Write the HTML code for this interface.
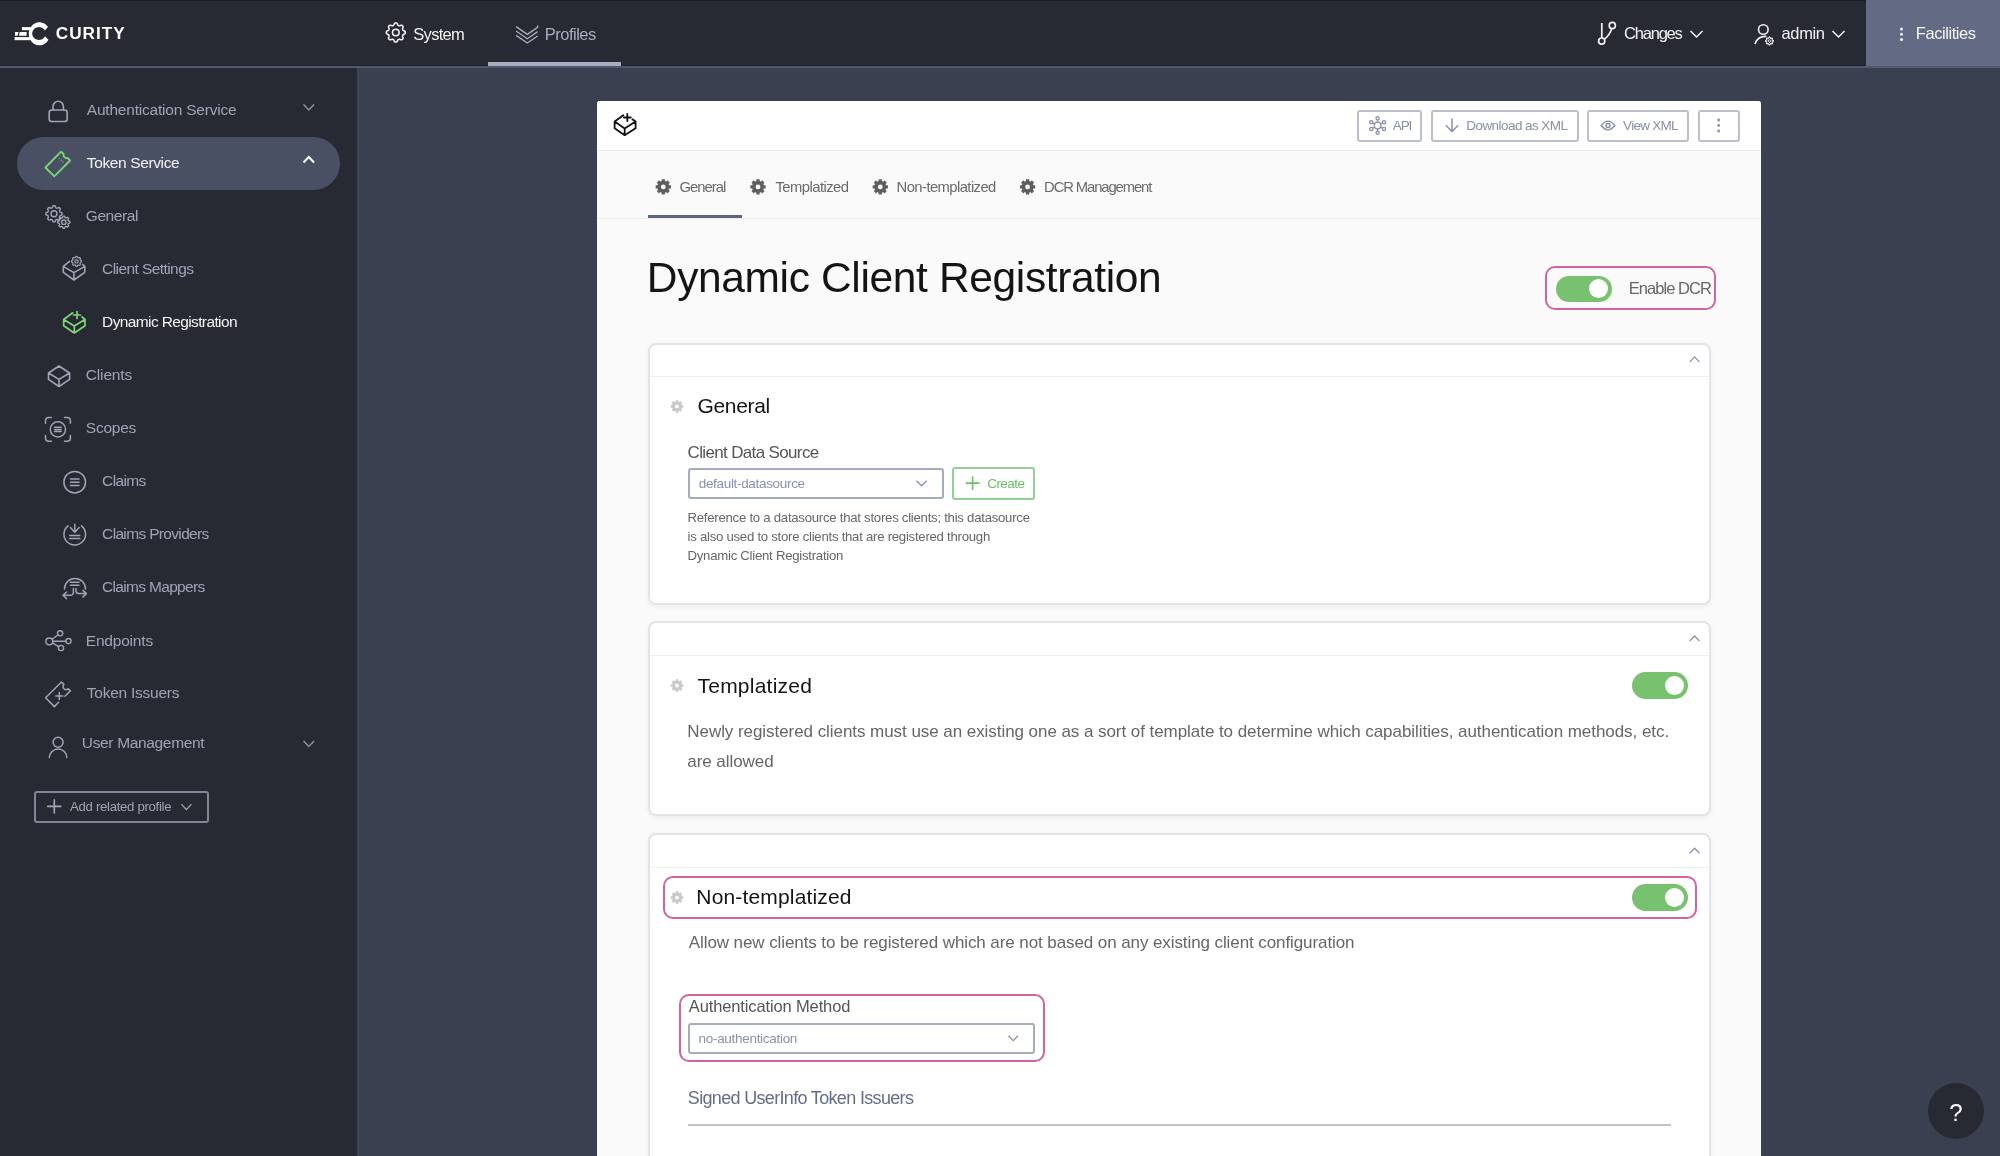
<!DOCTYPE html>
<html><head><meta charset="utf-8">
<style>
*{box-sizing:border-box;margin:0;padding:0}
html,body{width:2000px;height:1156px;overflow:hidden;font-family:"Liberation Sans",sans-serif;background:#3b4050;position:relative}
.abs{position:absolute}
.t{position:absolute;white-space:nowrap;line-height:1}
.bl{display:inline-block;width:0;height:0;vertical-align:baseline}
#tx{position:absolute;left:0;top:0;width:2000px;height:1156px;will-change:transform}
#ov{position:absolute;left:0;top:0;width:2000px;height:1156px;overflow:visible}
.btn{border:2px solid #bcc0cd;border-radius:3px;background:#fff}
.pink{border:2px solid #d4629f;border-radius:10px}
.tog{border-radius:14px;background:#78c26f}
.knob{position:absolute;width:19px;height:19px;border-radius:50%;background:#fff}
.card{background:#fff;border:2px solid #e1e5e9;border-radius:8px;box-shadow:0 2px 5px rgba(0,0,0,0.06)}
.ch{position:absolute;left:0;top:31.5px;width:100%;height:1px;background:#efefef}
.sel{border:2px solid #a6abbd;border-radius:3px;background:#fff}
</style></head><body>

<div class="abs" style="left:0;top:0;width:2000px;height:66px;background:#272a33;border-top:1px solid #1b1d23"></div>
<div class="abs" style="left:0;top:65px;width:2000px;height:1px;background:#20222a"></div>
<div class="abs" style="left:1866px;top:0;width:134px;height:66px;background:#636a83"></div>
<div class="abs" style="left:0;top:66px;width:2000px;height:2px;background:#51586f"></div>
<div class="abs" style="left:488px;top:62px;width:133px;height:4px;background:#a9adbf"></div>
<div class="abs" style="left:0;top:68px;width:357px;height:1088px;background:#272a33"></div>
<div class="abs" style="left:357px;top:68px;width:2px;height:1088px;background:#3f4352"></div>
<div class="abs" style="left:17px;top:137px;width:323px;height:53px;border-radius:27px;background:#4a5064"></div>
<div class="abs" style="left:33.5px;top:790.5px;width:175px;height:32px;border:2px solid #80859a;border-radius:3px"></div>
<!-- main card -->
<div class="abs" style="left:597px;top:101px;width:1164px;height:1100px;background:#fafafa;border-radius:3px 3px 0 0"></div>
<div class="abs" style="left:597px;top:101px;width:1164px;height:50px;background:#ffffff;border-radius:3px 3px 0 0;border-bottom:1px solid #ebebeb"></div>
<div class="abs" style="left:597px;top:218px;width:1164px;height:1px;background:#ececec"></div>
<div class="abs" style="left:647.5px;top:214.5px;width:94px;height:3px;background:#5c6585"></div>
<!-- header buttons -->
<div class="abs btn" style="left:1356.5px;top:109.5px;width:65.5px;height:32px"></div>
<div class="abs btn" style="left:1431px;top:109.5px;width:147.5px;height:32px"></div>
<div class="abs btn" style="left:1587px;top:109.5px;width:102px;height:32px"></div>
<div class="abs btn" style="left:1697.5px;top:109.5px;width:42.5px;height:32px"></div>
<!-- enable dcr -->
<div class="abs pink" style="left:1544.5px;top:265.5px;width:171.5px;height:44px"></div>
<div class="abs tog" style="left:1556px;top:275.5px;width:56px;height:26.5px"><div class="knob" style="left:33px;top:3.5px"></div></div>
<!-- section cards -->
<div class="abs card" style="left:647.5px;top:342.5px;width:1063.5px;height:262px"><div class="ch"></div></div>
<div class="abs card" style="left:647.5px;top:621px;width:1063.5px;height:194.5px"><div class="ch"></div></div>
<div class="abs card" style="left:647.5px;top:833px;width:1063.5px;height:400px"><div class="ch"></div></div>
<!-- card1 controls -->
<div class="abs sel" style="left:687.5px;top:468px;width:256px;height:31px"></div>
<div class="abs" style="left:952px;top:467px;width:83px;height:33px;border:2px solid #93d091;border-radius:3px"></div>
<!-- card2 toggle -->
<div class="abs tog" style="left:1631.5px;top:672px;width:56px;height:27px"><div class="knob" style="left:33px;top:4px"></div></div>
<!-- card3 -->
<div class="abs pink" style="left:662.5px;top:876px;width:1034px;height:43px"></div>
<div class="abs tog" style="left:1631.5px;top:884px;width:56px;height:27px"><div class="knob" style="left:33px;top:4px"></div></div>
<div class="abs pink" style="left:679px;top:994px;width:366px;height:67.5px"></div>
<div class="abs sel" style="left:688px;top:1023px;width:347px;height:30.5px"></div>
<div class="abs" style="left:688px;top:1124px;width:983px;height:2px;background:#c0c3d1"></div>
<!-- help -->
<div class="abs" style="left:1928px;top:1083px;width:56px;height:56px;border-radius:50%;background:#272a33"></div>
<svg id="ov" width="2000" height="1156" viewBox="0 0 2000 1156"><g fill="#ffffff"><path d="M47.98,27.01 L47.41,26.24 L46.79,25.52 L46.12,24.87 L45.40,24.28 L44.63,23.76 L43.83,23.31 L42.99,22.93 L42.13,22.64 L41.25,22.43 L40.35,22.30 L39.45,22.25 L38.55,22.29 L37.65,22.41 L36.77,22.61 L35.91,22.90 L35.07,23.26 L34.26,23.70 L33.49,24.21 L32.76,24.80 L32.08,25.45 L31.45,26.15 L30.89,26.92 L30.38,27.73 L29.94,28.59 L29.57,29.49 L29.26,30.42 L29.04,31.37 L28.89,32.34 L28.81,33.32 L28.81,34.30 L28.89,35.28 L29.04,36.25 L29.27,37.21 L29.57,38.13 L29.95,39.03 L30.39,39.89 L30.90,40.70 L31.47,41.46 L32.10,42.17 L32.78,42.82 L33.51,43.40 L34.28,43.91 L35.09,44.35 L35.93,44.71 L36.79,44.99 L37.67,45.20 L38.57,45.31 L39.47,45.35 L40.38,45.30 L41.27,45.17 L42.15,44.95 L43.01,44.66 L43.85,44.28 L44.65,43.83 L45.42,43.31 L46.14,42.72 L46.81,42.06 L47.43,41.34 L47.99,40.57 L48.49,39.75 L45.02,36.31 L44.73,36.80 L44.40,37.28 L44.02,37.72 L43.61,38.13 L43.16,38.50 L42.68,38.84 L42.16,39.13 L41.62,39.38 L41.06,39.58 L40.49,39.73 L39.90,39.84 L39.30,39.89 L38.70,39.90 L38.11,39.85 L37.52,39.75 L36.94,39.61 L36.38,39.42 L35.83,39.18 L35.31,38.89 L34.83,38.57 L34.37,38.20 L33.95,37.80 L33.57,37.36 L33.23,36.89 L32.93,36.40 L32.68,35.88 L32.49,35.34 L32.34,34.79 L32.24,34.23 L32.20,33.67 L32.21,33.10 L32.28,32.54 L32.39,31.98 L32.56,31.43 L32.78,30.91 L33.05,30.40 L33.36,29.91 L33.72,29.46 L34.11,29.03 L34.55,28.65 L35.02,28.30 L35.52,27.99 L36.05,27.72 L36.60,27.50 L37.17,27.33 L37.76,27.20 L38.35,27.13 L38.95,27.10 L39.55,27.13 L40.14,27.20 L40.73,27.33 L41.30,27.50 L41.85,27.72 L42.38,27.99 L42.88,28.30 L43.35,28.65 L43.79,29.03 L44.18,29.46 L44.54,29.91 L44.85,30.40Z"/><rect x="21.9" y="27.1" width="9" height="3.1"/><path d="M15,32 H18.6 L17.6,35.7 H15 Z M19.8,32 H26.6 V35.7 H18.9 Z"/><rect x="14.6" y="37.1" width="15.5" height="3.1"/></g>
<path d="M405.30,32.50 L405.28,32.81 L405.22,33.12 L405.10,33.42 L404.89,33.70 L404.56,33.95 L404.14,34.16 L403.71,34.34 L403.37,34.53 L403.13,34.72 L402.96,34.93 L402.83,35.15 L402.73,35.37 L402.64,35.60 L402.58,35.84 L402.55,36.11 L402.59,36.42 L402.70,36.79 L402.87,37.22 L403.02,37.67 L403.07,38.08 L403.02,38.43 L402.90,38.72 L402.72,38.98 L402.52,39.22 L402.28,39.42 L402.02,39.60 L401.73,39.72 L401.38,39.77 L400.97,39.72 L400.52,39.57 L400.09,39.40 L399.72,39.29 L399.41,39.25 L399.14,39.28 L398.90,39.34 L398.67,39.43 L398.45,39.53 L398.23,39.66 L398.02,39.83 L397.83,40.07 L397.64,40.41 L397.46,40.84 L397.25,41.26 L397.00,41.59 L396.72,41.80 L396.42,41.92 L396.11,41.98 L395.80,42.00 L395.49,41.98 L395.18,41.92 L394.88,41.80 L394.60,41.59 L394.35,41.26 L394.14,40.84 L393.96,40.41 L393.77,40.07 L393.58,39.83 L393.37,39.66 L393.15,39.53 L392.93,39.43 L392.70,39.34 L392.46,39.28 L392.19,39.25 L391.88,39.29 L391.51,39.40 L391.08,39.57 L390.63,39.72 L390.22,39.77 L389.87,39.72 L389.58,39.60 L389.32,39.42 L389.08,39.22 L388.88,38.98 L388.70,38.72 L388.58,38.43 L388.53,38.08 L388.58,37.67 L388.73,37.22 L388.90,36.79 L389.01,36.42 L389.05,36.11 L389.02,35.84 L388.96,35.60 L388.87,35.37 L388.77,35.15 L388.64,34.93 L388.47,34.72 L388.23,34.53 L387.89,34.34 L387.46,34.16 L387.04,33.95 L386.71,33.70 L386.50,33.42 L386.38,33.12 L386.32,32.81 L386.30,32.50 L386.32,32.19 L386.38,31.88 L386.50,31.58 L386.71,31.30 L387.04,31.05 L387.46,30.84 L387.89,30.66 L388.23,30.47 L388.47,30.28 L388.64,30.07 L388.77,29.85 L388.87,29.63 L388.96,29.40 L389.02,29.16 L389.05,28.89 L389.01,28.58 L388.90,28.21 L388.73,27.78 L388.58,27.33 L388.53,26.92 L388.58,26.57 L388.70,26.28 L388.88,26.02 L389.08,25.78 L389.32,25.58 L389.58,25.40 L389.87,25.28 L390.22,25.23 L390.63,25.28 L391.08,25.43 L391.51,25.60 L391.88,25.71 L392.19,25.75 L392.46,25.72 L392.70,25.66 L392.93,25.57 L393.15,25.47 L393.37,25.34 L393.58,25.17 L393.77,24.93 L393.96,24.59 L394.14,24.16 L394.35,23.74 L394.60,23.41 L394.88,23.20 L395.18,23.08 L395.49,23.02 L395.80,23.00 L396.11,23.02 L396.42,23.08 L396.72,23.20 L397.00,23.41 L397.25,23.74 L397.46,24.16 L397.64,24.59 L397.83,24.93 L398.02,25.17 L398.23,25.34 L398.45,25.47 L398.67,25.57 L398.90,25.66 L399.14,25.72 L399.41,25.75 L399.72,25.71 L400.09,25.60 L400.52,25.43 L400.97,25.28 L401.38,25.23 L401.73,25.28 L402.02,25.40 L402.28,25.58 L402.52,25.78 L402.72,26.02 L402.90,26.28 L403.02,26.57 L403.07,26.92 L403.02,27.33 L402.87,27.78 L402.70,28.21 L402.59,28.58 L402.55,28.89 L402.58,29.16 L402.64,29.40 L402.73,29.63 L402.83,29.85 L402.96,30.07 L403.13,30.28 L403.37,30.47 L403.71,30.66 L404.14,30.84 L404.56,31.05 L404.89,31.30 L405.10,31.58 L405.22,31.88 L405.28,32.19Z" fill="none" stroke="#f2f2f4" stroke-width="1.6" stroke-linejoin="round"/><circle cx="395.8" cy="32.5" r="3.3" fill="none" stroke="#f2f2f4" stroke-width="1.6"/>
<g fill="none" stroke="#a9adbf" stroke-width="1.3"><path d="M516.1,26.6 L527.3,34.4 L537.6,27.4 V25.6"/><path d="M516.1,31 L527.3,38.8 L537.6,31.6"/><path d="M516.1,35.4 L527.3,43 L537.6,36"/></g>
<g fill="none" stroke="#f2f2f4" stroke-width="1.7"><line x1="1601.8" y1="23" x2="1601.8" y2="38"/><circle cx="1601.7" cy="41.1" r="3.1"/><circle cx="1612.3" cy="25.5" r="3.1"/><path d="M1611.6,28.6 Q1610,35.2 1604,39.2"/></g>
<path d="M1690.5,31 L1696.5,37 L1702.5,31" fill="none" stroke="#f2f2f4" stroke-width="1.5"/>
<g fill="none" stroke="#f2f2f4" stroke-width="1.6"><circle cx="1763.3" cy="29.5" r="4.8"/><path d="M1755,44 A10,10 0 0,1 1766.5,36.5"/></g><path d="M1773.40,41.00 L1773.40,41.13 L1773.38,41.25 L1773.35,41.38 L1773.29,41.50 L1773.14,41.60 L1772.88,41.67 L1772.63,41.73 L1772.48,41.80 L1772.40,41.88 L1772.35,41.97 L1772.31,42.06 L1772.27,42.15 L1772.23,42.24 L1772.20,42.33 L1772.17,42.43 L1772.17,42.54 L1772.23,42.70 L1772.37,42.92 L1772.50,43.15 L1772.53,43.32 L1772.49,43.46 L1772.43,43.57 L1772.35,43.66 L1772.26,43.76 L1772.16,43.85 L1772.07,43.93 L1771.96,43.99 L1771.82,44.03 L1771.65,44.00 L1771.42,43.87 L1771.20,43.73 L1771.04,43.67 L1770.93,43.67 L1770.83,43.70 L1770.74,43.73 L1770.65,43.77 L1770.56,43.81 L1770.47,43.85 L1770.38,43.90 L1770.30,43.98 L1770.23,44.13 L1770.17,44.38 L1770.10,44.64 L1770.00,44.79 L1769.88,44.85 L1769.75,44.88 L1769.63,44.90 L1769.50,44.90 L1769.37,44.90 L1769.25,44.88 L1769.12,44.85 L1769.00,44.79 L1768.90,44.64 L1768.83,44.38 L1768.77,44.13 L1768.70,43.98 L1768.62,43.90 L1768.53,43.85 L1768.44,43.81 L1768.35,43.77 L1768.26,43.73 L1768.17,43.70 L1768.07,43.67 L1767.96,43.67 L1767.80,43.73 L1767.58,43.87 L1767.35,44.00 L1767.18,44.03 L1767.04,43.99 L1766.93,43.93 L1766.84,43.85 L1766.74,43.76 L1766.65,43.66 L1766.57,43.57 L1766.51,43.46 L1766.47,43.32 L1766.50,43.15 L1766.63,42.92 L1766.77,42.70 L1766.83,42.54 L1766.83,42.43 L1766.80,42.33 L1766.77,42.24 L1766.73,42.15 L1766.69,42.06 L1766.65,41.97 L1766.60,41.88 L1766.52,41.80 L1766.37,41.73 L1766.12,41.67 L1765.86,41.60 L1765.71,41.50 L1765.65,41.38 L1765.62,41.25 L1765.60,41.13 L1765.60,41.00 L1765.60,40.87 L1765.62,40.75 L1765.65,40.62 L1765.71,40.50 L1765.86,40.40 L1766.12,40.33 L1766.37,40.27 L1766.52,40.20 L1766.60,40.12 L1766.65,40.03 L1766.69,39.94 L1766.73,39.85 L1766.77,39.76 L1766.80,39.67 L1766.83,39.57 L1766.83,39.46 L1766.77,39.30 L1766.63,39.08 L1766.50,38.85 L1766.47,38.68 L1766.51,38.54 L1766.57,38.43 L1766.65,38.34 L1766.74,38.24 L1766.84,38.15 L1766.93,38.07 L1767.04,38.01 L1767.18,37.97 L1767.35,38.00 L1767.58,38.13 L1767.80,38.27 L1767.96,38.33 L1768.07,38.33 L1768.17,38.30 L1768.26,38.27 L1768.35,38.23 L1768.44,38.19 L1768.53,38.15 L1768.62,38.10 L1768.70,38.02 L1768.77,37.87 L1768.83,37.62 L1768.90,37.36 L1769.00,37.21 L1769.12,37.15 L1769.25,37.12 L1769.37,37.10 L1769.50,37.10 L1769.63,37.10 L1769.75,37.12 L1769.88,37.15 L1770.00,37.21 L1770.10,37.36 L1770.17,37.62 L1770.23,37.87 L1770.30,38.02 L1770.38,38.10 L1770.47,38.15 L1770.56,38.19 L1770.65,38.23 L1770.74,38.27 L1770.83,38.30 L1770.93,38.33 L1771.04,38.33 L1771.20,38.27 L1771.42,38.13 L1771.65,38.00 L1771.82,37.97 L1771.96,38.01 L1772.07,38.07 L1772.16,38.15 L1772.26,38.24 L1772.35,38.34 L1772.43,38.43 L1772.49,38.54 L1772.53,38.68 L1772.50,38.85 L1772.37,39.08 L1772.23,39.30 L1772.17,39.46 L1772.17,39.57 L1772.20,39.67 L1772.23,39.76 L1772.27,39.85 L1772.31,39.94 L1772.35,40.03 L1772.40,40.12 L1772.48,40.20 L1772.63,40.27 L1772.88,40.33 L1773.14,40.40 L1773.29,40.50 L1773.35,40.62 L1773.38,40.75 L1773.40,40.87Z" fill="#272a33" stroke="#f2f2f4" stroke-width="1.1"/><circle cx="1769.5" cy="41" r="1.3" fill="none" stroke="#f2f2f4" stroke-width="0.9"/>
<path d="M1832.5,31 L1838.5,37 L1844.5,31" fill="none" stroke="#f2f2f4" stroke-width="1.5"/>
<g fill="#f6f6f8"><circle cx="1901.5" cy="29" r="1.5"/><circle cx="1901.5" cy="34.2" r="1.5"/><circle cx="1901.5" cy="39.4" r="1.5"/></g>
<g fill="none" stroke="#9fa4b6" stroke-width="1.6" stroke-linejoin="round" stroke-linecap="round"><rect x="49.2" y="110" width="18" height="11.5" rx="2.6"/><path d="M53,110 V106.5 A5.2,5.2 0 0,1 63.4,106.5 V110"/></g>
<path d="M303.5,104.5 L308.8,110 L314,104.5" fill="none" stroke="#8b90a4" stroke-width="1.5"/>
<g fill="none" stroke="#7bd677" stroke-width="1.8" stroke-linejoin="round" stroke-linecap="round"><path d="M61.1,151.6 L45.4,167.5 L54.3,176.3 L70.1,160.5 L67.6,158 A3.2,3.2 0 0,1 63.6,154 Z"/></g>
<g fill="#7bd677"><circle cx="59.5" cy="158.5" r="0.6"/><circle cx="61.2" cy="160.2" r="0.6"/><circle cx="62.9" cy="161.9" r="0.6"/></g>
<path d="M303.5,162.5 L308.8,157 L314,162.5" fill="none" stroke="#ffffff" stroke-width="2"/>
<g fill="none" stroke="#9fa4b6" stroke-width="1.4" stroke-linejoin="round" stroke-linecap="round"><path d="M62.10,213.80 L62.09,214.06 L62.07,214.33 L62.00,214.59 L61.87,214.84 L61.57,215.05 L61.06,215.20 L60.55,215.33 L60.24,215.47 L60.08,215.65 L59.98,215.83 L59.90,216.02 L59.82,216.21 L59.74,216.40 L59.67,216.59 L59.61,216.80 L59.60,217.03 L59.71,217.35 L59.99,217.80 L60.24,218.27 L60.30,218.63 L60.22,218.90 L60.08,219.13 L59.91,219.33 L59.73,219.53 L59.53,219.71 L59.33,219.88 L59.10,220.02 L58.83,220.10 L58.47,220.04 L58.00,219.79 L57.55,219.51 L57.23,219.40 L57.00,219.41 L56.79,219.47 L56.60,219.54 L56.41,219.62 L56.22,219.70 L56.03,219.78 L55.85,219.88 L55.67,220.04 L55.53,220.35 L55.40,220.86 L55.25,221.37 L55.04,221.67 L54.79,221.80 L54.53,221.87 L54.26,221.89 L54.00,221.90 L53.74,221.89 L53.47,221.87 L53.21,221.80 L52.96,221.67 L52.75,221.37 L52.60,220.86 L52.47,220.35 L52.33,220.04 L52.15,219.88 L51.97,219.78 L51.78,219.70 L51.59,219.62 L51.40,219.54 L51.21,219.47 L51.00,219.41 L50.77,219.40 L50.45,219.51 L50.00,219.79 L49.53,220.04 L49.17,220.10 L48.90,220.02 L48.67,219.88 L48.47,219.71 L48.27,219.53 L48.09,219.33 L47.92,219.13 L47.78,218.90 L47.70,218.63 L47.76,218.27 L48.01,217.80 L48.29,217.35 L48.40,217.03 L48.39,216.80 L48.33,216.59 L48.26,216.40 L48.18,216.21 L48.10,216.02 L48.02,215.83 L47.92,215.65 L47.76,215.47 L47.45,215.33 L46.94,215.20 L46.43,215.05 L46.13,214.84 L46.00,214.59 L45.93,214.33 L45.91,214.06 L45.90,213.80 L45.91,213.54 L45.93,213.27 L46.00,213.01 L46.13,212.76 L46.43,212.55 L46.94,212.40 L47.45,212.27 L47.76,212.13 L47.92,211.95 L48.02,211.77 L48.10,211.58 L48.18,211.39 L48.26,211.20 L48.33,211.01 L48.39,210.80 L48.40,210.57 L48.29,210.25 L48.01,209.80 L47.76,209.33 L47.70,208.97 L47.78,208.70 L47.92,208.47 L48.09,208.27 L48.27,208.07 L48.47,207.89 L48.67,207.72 L48.90,207.58 L49.17,207.50 L49.53,207.56 L50.00,207.81 L50.45,208.09 L50.77,208.20 L51.00,208.19 L51.21,208.13 L51.40,208.06 L51.59,207.98 L51.78,207.90 L51.97,207.82 L52.15,207.72 L52.33,207.56 L52.47,207.25 L52.60,206.74 L52.75,206.23 L52.96,205.93 L53.21,205.80 L53.47,205.73 L53.74,205.71 L54.00,205.70 L54.26,205.71 L54.53,205.73 L54.79,205.80 L55.04,205.93 L55.25,206.23 L55.40,206.74 L55.53,207.25 L55.67,207.56 L55.85,207.72 L56.03,207.82 L56.22,207.90 L56.41,207.98 L56.60,208.06 L56.79,208.13 L57.00,208.19 L57.23,208.20 L57.55,208.09 L58.00,207.81 L58.47,207.56 L58.83,207.50 L59.10,207.58 L59.33,207.72 L59.53,207.89 L59.73,208.07 L59.91,208.27 L60.08,208.47 L60.22,208.70 L60.30,208.97 L60.24,209.33 L59.99,209.80 L59.71,210.25 L59.60,210.57 L59.61,210.80 L59.67,211.01 L59.74,211.20 L59.82,211.39 L59.90,211.58 L59.98,211.77 L60.08,211.95 L60.24,212.13 L60.55,212.27 L61.06,212.40 L61.57,212.55 L61.87,212.76 L62.00,213.01 L62.07,213.27 L62.09,213.54Z"/><circle cx="54" cy="213.8" r="3"/></g>
<g fill="none" stroke="#9fa4b6" stroke-width="1.4" stroke-linejoin="round" stroke-linecap="round"><path d="M69.90,222.20 L69.89,222.40 L69.87,222.60 L69.83,222.79 L69.72,222.98 L69.49,223.14 L69.10,223.25 L68.70,223.34 L68.46,223.45 L68.34,223.58 L68.26,223.72 L68.20,223.86 L68.14,224.00 L68.08,224.14 L68.03,224.28 L67.98,224.44 L67.98,224.61 L68.07,224.86 L68.29,225.20 L68.49,225.56 L68.54,225.84 L68.48,226.04 L68.38,226.21 L68.25,226.37 L68.11,226.51 L67.97,226.65 L67.81,226.78 L67.64,226.88 L67.44,226.94 L67.16,226.89 L66.80,226.69 L66.46,226.47 L66.21,226.38 L66.04,226.38 L65.88,226.43 L65.74,226.48 L65.60,226.54 L65.46,226.60 L65.32,226.66 L65.18,226.74 L65.05,226.86 L64.94,227.10 L64.85,227.50 L64.74,227.89 L64.58,228.12 L64.39,228.23 L64.20,228.27 L64.00,228.29 L63.80,228.30 L63.60,228.29 L63.40,228.27 L63.21,228.23 L63.02,228.12 L62.86,227.89 L62.75,227.50 L62.66,227.10 L62.55,226.86 L62.42,226.74 L62.28,226.66 L62.14,226.60 L62.00,226.54 L61.86,226.48 L61.72,226.43 L61.56,226.38 L61.39,226.38 L61.14,226.47 L60.80,226.69 L60.44,226.89 L60.16,226.94 L59.96,226.88 L59.79,226.78 L59.63,226.65 L59.49,226.51 L59.35,226.37 L59.22,226.21 L59.12,226.04 L59.06,225.84 L59.11,225.56 L59.31,225.20 L59.53,224.86 L59.62,224.61 L59.62,224.44 L59.57,224.28 L59.52,224.14 L59.46,224.00 L59.40,223.86 L59.34,223.72 L59.26,223.58 L59.14,223.45 L58.90,223.34 L58.50,223.25 L58.11,223.14 L57.88,222.98 L57.77,222.79 L57.73,222.60 L57.71,222.40 L57.70,222.20 L57.71,222.00 L57.73,221.80 L57.77,221.61 L57.88,221.42 L58.11,221.26 L58.50,221.15 L58.90,221.06 L59.14,220.95 L59.26,220.82 L59.34,220.68 L59.40,220.54 L59.46,220.40 L59.52,220.26 L59.57,220.12 L59.62,219.96 L59.62,219.79 L59.53,219.54 L59.31,219.20 L59.11,218.84 L59.06,218.56 L59.12,218.36 L59.22,218.19 L59.35,218.03 L59.49,217.89 L59.63,217.75 L59.79,217.62 L59.96,217.52 L60.16,217.46 L60.44,217.51 L60.80,217.71 L61.14,217.93 L61.39,218.02 L61.56,218.02 L61.72,217.97 L61.86,217.92 L62.00,217.86 L62.14,217.80 L62.28,217.74 L62.42,217.66 L62.55,217.54 L62.66,217.30 L62.75,216.90 L62.86,216.51 L63.02,216.28 L63.21,216.17 L63.40,216.13 L63.60,216.11 L63.80,216.10 L64.00,216.11 L64.20,216.13 L64.39,216.17 L64.58,216.28 L64.74,216.51 L64.85,216.90 L64.94,217.30 L65.05,217.54 L65.18,217.66 L65.32,217.74 L65.46,217.80 L65.60,217.86 L65.74,217.92 L65.88,217.97 L66.04,218.02 L66.21,218.02 L66.46,217.93 L66.80,217.71 L67.16,217.51 L67.44,217.46 L67.64,217.52 L67.81,217.62 L67.97,217.75 L68.11,217.89 L68.25,218.03 L68.38,218.19 L68.48,218.36 L68.54,218.56 L68.49,218.84 L68.29,219.20 L68.07,219.54 L67.98,219.79 L67.98,219.96 L68.03,220.12 L68.08,220.26 L68.14,220.40 L68.20,220.54 L68.26,220.68 L68.34,220.82 L68.46,220.95 L68.70,221.06 L69.10,221.15 L69.49,221.26 L69.72,221.42 L69.83,221.61 L69.87,221.80 L69.89,222.00Z"/><circle cx="63.8" cy="222.2" r="2.2"/></g>
<g fill="none" stroke="#9fa4b6" stroke-width="1.6" stroke-linejoin="round" stroke-linecap="round"><path d="M63.3,272.3 L63.3,266.4 L73.9,272.6 L84.8,266.4 L84.8,272.3 L73.9,280 Z M73.9,272.6 L73.9,280 M63.3,266.4 L69.5,261.4 M82.7,264.4 L84.8,266.4"/></g>
<g fill="none" stroke="#9fa4b6" stroke-width="1.2" stroke-linejoin="round" stroke-linecap="round"><path d="M81.50,261.40 L81.50,261.56 L81.48,261.73 L81.44,261.89 L81.37,262.04 L81.20,262.18 L80.91,262.28 L80.63,262.36 L80.45,262.46 L80.36,262.57 L80.30,262.69 L80.25,262.81 L80.20,262.93 L80.15,263.05 L80.10,263.17 L80.06,263.30 L80.04,263.44 L80.10,263.64 L80.24,263.90 L80.37,264.17 L80.40,264.39 L80.34,264.55 L80.25,264.69 L80.15,264.82 L80.04,264.94 L79.92,265.05 L79.79,265.15 L79.65,265.24 L79.49,265.30 L79.27,265.27 L79.00,265.14 L78.74,265.00 L78.54,264.94 L78.40,264.96 L78.27,265.00 L78.15,265.05 L78.03,265.10 L77.91,265.15 L77.79,265.20 L77.67,265.26 L77.56,265.35 L77.46,265.53 L77.38,265.81 L77.28,266.10 L77.14,266.27 L76.99,266.34 L76.83,266.38 L76.66,266.40 L76.50,266.40 L76.34,266.40 L76.17,266.38 L76.01,266.34 L75.86,266.27 L75.72,266.10 L75.62,265.81 L75.54,265.53 L75.44,265.35 L75.33,265.26 L75.21,265.20 L75.09,265.15 L74.97,265.10 L74.85,265.05 L74.73,265.00 L74.60,264.96 L74.46,264.94 L74.26,265.00 L74.00,265.14 L73.73,265.27 L73.51,265.30 L73.35,265.24 L73.21,265.15 L73.08,265.05 L72.96,264.94 L72.85,264.82 L72.75,264.69 L72.66,264.55 L72.60,264.39 L72.63,264.17 L72.76,263.90 L72.90,263.64 L72.96,263.44 L72.94,263.30 L72.90,263.17 L72.85,263.05 L72.80,262.93 L72.75,262.81 L72.70,262.69 L72.64,262.57 L72.55,262.46 L72.37,262.36 L72.09,262.28 L71.80,262.18 L71.63,262.04 L71.56,261.89 L71.52,261.73 L71.50,261.56 L71.50,261.40 L71.50,261.24 L71.52,261.07 L71.56,260.91 L71.63,260.76 L71.80,260.62 L72.09,260.52 L72.37,260.44 L72.55,260.34 L72.64,260.23 L72.70,260.11 L72.75,259.99 L72.80,259.87 L72.85,259.75 L72.90,259.63 L72.94,259.50 L72.96,259.36 L72.90,259.16 L72.76,258.90 L72.63,258.63 L72.60,258.41 L72.66,258.25 L72.75,258.11 L72.85,257.98 L72.96,257.86 L73.08,257.75 L73.21,257.65 L73.35,257.56 L73.51,257.50 L73.73,257.53 L74.00,257.66 L74.26,257.80 L74.46,257.86 L74.60,257.84 L74.73,257.80 L74.85,257.75 L74.97,257.70 L75.09,257.65 L75.21,257.60 L75.33,257.54 L75.44,257.45 L75.54,257.27 L75.62,256.99 L75.72,256.70 L75.86,256.53 L76.01,256.46 L76.17,256.42 L76.34,256.40 L76.50,256.40 L76.66,256.40 L76.83,256.42 L76.99,256.46 L77.14,256.53 L77.28,256.70 L77.38,256.99 L77.46,257.27 L77.56,257.45 L77.67,257.54 L77.79,257.60 L77.91,257.65 L78.03,257.70 L78.15,257.75 L78.27,257.80 L78.40,257.84 L78.54,257.86 L78.74,257.80 L79.00,257.66 L79.27,257.53 L79.49,257.50 L79.65,257.56 L79.79,257.65 L79.92,257.75 L80.04,257.86 L80.15,257.98 L80.25,258.11 L80.34,258.25 L80.40,258.41 L80.37,258.63 L80.24,258.90 L80.10,259.16 L80.04,259.36 L80.06,259.50 L80.10,259.63 L80.15,259.75 L80.20,259.87 L80.25,259.99 L80.30,260.11 L80.36,260.23 L80.45,260.34 L80.63,260.44 L80.91,260.52 L81.20,260.62 L81.37,260.76 L81.44,260.91 L81.48,261.07 L81.50,261.24Z"/><circle cx="76.5" cy="261.4" r="1.6"/></g>
<g fill="none" stroke="#7bd677" stroke-width="1.7" stroke-linejoin="round" stroke-linecap="round"><path d="M63.7,325.7 L63.7,319.5 L74.3,326 L85,319.5 L85,325.7 L74.3,333 Z M74.3,326 L74.3,333 M63.7,319.5 L72.7,312.8 M82.1,317 L85,319.5"/><path d="M77,311.5 V318.5 M73.5,315 H80.5"/></g>
<g fill="none" stroke="#9fa4b6" stroke-width="1.6" stroke-linejoin="round" stroke-linecap="round"><path d="M48.5,373 L59,366 L69.6,373 L69.6,379.4 L59,386.5 L48.5,379.4 Z M48.5,373 L59,379.4 L69.6,373 M59,379.4 V386.5"/></g>
<g fill="none" stroke="#9fa4b6" stroke-width="1.5" stroke-linejoin="round" stroke-linecap="round"><circle cx="57.9" cy="429.4" r="7.6"/><path d="M54.6,427.3 H61.2 M54.6,429.4 H61.2 M54.6,431.5 H61.2"/><path d="M45.5,423.2 V420.5 A3.2,3.2 0 0,1 48.7,417.4 H51.4 M64.5,417.4 H67.2 A3.2,3.2 0 0,1 70.4,420.5 V423.2 M70.4,435.5 V438.2 A3.2,3.2 0 0,1 67.2,441.3 H64.5 M51.4,441.3 H48.7 A3.2,3.2 0 0,1 45.5,438.2 V435.5"/></g>
<g fill="none" stroke="#9fa4b6" stroke-width="1.5" stroke-linejoin="round" stroke-linecap="round"><circle cx="74.7" cy="482.2" r="10.8"/><path d="M70.5,479 H79 M70.5,482.2 H79 M70.5,485.4 H79"/></g>
<g fill="none" stroke="#9fa4b6" stroke-width="1.5" stroke-linejoin="round" stroke-linecap="round"><path d="M68,525.8 A10.8,10.8 0 1,0 81.5,525.8"/><path d="M74.8,524.2 V532.4 M70.4,527.6 L74.8,532.2 L79.2,527.6 M69.8,535.4 H79.8 M69.8,538.6 H79.8"/></g>
<g fill="none" stroke="#9fa4b6" stroke-width="1.5" stroke-linejoin="round" stroke-linecap="round"><path d="M64.5,589 A10.5,10.5 0 0,1 85.5,589"/><path d="M70.4,582.3 H79 M70.4,585.3 H79"/><path d="M73.4,588.4 V592.5 A2.8,2.8 0 0,1 70.6,595.3 H63 M66.6,592 L63,595.3 L66.6,598.6"/><path d="M76,588.4 V590.8 A2.8,2.8 0 0,0 78.8,593.6 H86.4 M83,590.4 L86.4,593.6 L83,596.9"/></g>
<g fill="none" stroke="#9fa4b6" stroke-width="1.4" stroke-linejoin="round" stroke-linecap="round"><circle cx="49.3" cy="641.4" r="3.4"/><circle cx="60.1" cy="633.3" r="2.6"/><circle cx="68.5" cy="641.1" r="2.6"/><circle cx="61" cy="648" r="2.6"/><path d="M52.2,639.3 L58,634.8 M52.7,641.3 H65.9 M52.5,642.8 L58.6,646.7"/></g>
<g fill="none" stroke="#9fa4b6" stroke-width="1.5" stroke-linejoin="round" stroke-linecap="round"><path d="M64.9,696.3 L70.4,690.9 L68.2,688.7 A3,3 0 0,1 63.9,684.4 L61.5,682 L45.6,697.8 L54.4,706.6 L58.7,702.3"/><path d="M59.3,692.6 V699.6 M55.8,696.1 H62.8"/></g>
<g fill="none" stroke="#9fa4b6" stroke-width="1.5" stroke-linejoin="round" stroke-linecap="round"><circle cx="58.1" cy="742.3" r="5"/><path d="M49.4,757.6 A8.7,8.7 0 0,1 66.8,757.6"/></g>
<path d="M303.5,741 L308.8,746.5 L314,741" fill="none" stroke="#8b90a4" stroke-width="1.5"/>
<g fill="none" stroke="#a3a8ba" stroke-width="1.6" stroke-linejoin="round" stroke-linecap="round"><path d="M54.3,799.8 V813 M47.7,806.4 H60.9"/></g>
<g fill="none" stroke="#a3a8ba" stroke-width="1.3" stroke-linejoin="round" stroke-linecap="round"><path d="M181.8,804.6 L186.4,809.6 L191,804.6"/></g>
<g fill="none" stroke="#111111" stroke-width="1.8" stroke-linejoin="round" stroke-linecap="round"><path d="M614.6,128.2 L614.6,121.5 L624.7,128.5 L635.6,121.5 L635.6,128.2 L624.7,135.2 Z M624.7,128.5 L624.7,135.2 M614.6,121.5 L623.4,115.2 M632.4,119.2 L635.6,121.5"/><path d="M627.3,114 V121 M623.8,117.5 H630.8"/></g>
<g fill="none" stroke="#8a90a6" stroke-width="1.3"><circle cx="1377.6" cy="125.5" r="3.3"/><circle cx="1377.6" cy="118.3" r="1.6"/><circle cx="1377.6" cy="132.8" r="1.6"/><circle cx="1371.2" cy="122.3" r="1.6"/><circle cx="1384" cy="122.3" r="1.6"/><circle cx="1371.2" cy="129" r="1.6"/><circle cx="1384" cy="129" r="1.6"/><path d="M1377.6,119.9 V122.2 M1377.6,128.8 V131.2 M1372.6,123 L1374.6,124 M1382.6,123 L1380.6,124 M1372.6,128.2 L1374.6,127.1 M1382.6,128.2 L1380.6,127.1"/></g>
<path d="M1452,118.5 V131.5 M1446,125.5 L1452,131.5 L1458,125.5" fill="none" stroke="#8a90a6" stroke-width="1.5"/>
<g fill="none" stroke="#8a90a6" stroke-width="1.4"><path d="M1601.3,125.5 Q1608,116.8 1614.8,125.5 Q1608,134.2 1601.3,125.5 Z"/><circle cx="1608" cy="125.5" r="2"/></g>
<g fill="#8a90a6"><circle cx="1718.7" cy="120" r="1.4"/><circle cx="1718.7" cy="125.5" r="1.4"/><circle cx="1718.7" cy="131" r="1.4"/></g>
<path d="M661.00,181.36 L661.70,181.12 L661.63,179.28 L664.97,179.28 L664.90,181.12 L665.60,181.36 L666.26,181.68 L667.51,180.33 L669.87,182.69 L668.52,183.94 L668.84,184.60 L669.08,185.30 L670.92,185.23 L670.92,188.57 L669.08,188.50 L668.84,189.20 L668.52,189.86 L669.87,191.11 L667.51,193.47 L666.26,192.12 L665.60,192.44 L664.90,192.68 L664.97,194.52 L661.63,194.52 L661.70,192.68 L661.00,192.44 L660.34,192.12 L659.09,193.47 L656.73,191.11 L658.08,189.86 L657.76,189.20 L657.52,188.50 L655.68,188.57 L655.68,185.23 L657.52,185.30 L657.76,184.60 L658.08,183.94 L656.73,182.69 L659.09,180.33 L660.34,181.68Z M665.70,186.90 A2.4,2.4 0 1,0 660.90,186.90 A2.4,2.4 0 1,0 665.70,186.90Z" fill="#5e5e5e" fill-rule="evenodd"/>
<path d="M755.70,181.36 L756.40,181.12 L756.33,179.28 L759.67,179.28 L759.60,181.12 L760.30,181.36 L760.96,181.68 L762.21,180.33 L764.57,182.69 L763.22,183.94 L763.54,184.60 L763.78,185.30 L765.62,185.23 L765.62,188.57 L763.78,188.50 L763.54,189.20 L763.22,189.86 L764.57,191.11 L762.21,193.47 L760.96,192.12 L760.30,192.44 L759.60,192.68 L759.67,194.52 L756.33,194.52 L756.40,192.68 L755.70,192.44 L755.04,192.12 L753.79,193.47 L751.43,191.11 L752.78,189.86 L752.46,189.20 L752.22,188.50 L750.38,188.57 L750.38,185.23 L752.22,185.30 L752.46,184.60 L752.78,183.94 L751.43,182.69 L753.79,180.33 L755.04,181.68Z M760.40,186.90 A2.4,2.4 0 1,0 755.60,186.90 A2.4,2.4 0 1,0 760.40,186.90Z" fill="#5e5e5e" fill-rule="evenodd"/>
<path d="M878.00,181.36 L878.70,181.12 L878.63,179.28 L881.97,179.28 L881.90,181.12 L882.60,181.36 L883.26,181.68 L884.51,180.33 L886.87,182.69 L885.52,183.94 L885.84,184.60 L886.08,185.30 L887.92,185.23 L887.92,188.57 L886.08,188.50 L885.84,189.20 L885.52,189.86 L886.87,191.11 L884.51,193.47 L883.26,192.12 L882.60,192.44 L881.90,192.68 L881.97,194.52 L878.63,194.52 L878.70,192.68 L878.00,192.44 L877.34,192.12 L876.09,193.47 L873.73,191.11 L875.08,189.86 L874.76,189.20 L874.52,188.50 L872.68,188.57 L872.68,185.23 L874.52,185.30 L874.76,184.60 L875.08,183.94 L873.73,182.69 L876.09,180.33 L877.34,181.68Z M882.70,186.90 A2.4,2.4 0 1,0 877.90,186.90 A2.4,2.4 0 1,0 882.70,186.90Z" fill="#5e5e5e" fill-rule="evenodd"/>
<path d="M1025.30,181.36 L1026.00,181.12 L1025.93,179.28 L1029.27,179.28 L1029.20,181.12 L1029.90,181.36 L1030.56,181.68 L1031.81,180.33 L1034.17,182.69 L1032.82,183.94 L1033.14,184.60 L1033.38,185.30 L1035.22,185.23 L1035.22,188.57 L1033.38,188.50 L1033.14,189.20 L1032.82,189.86 L1034.17,191.11 L1031.81,193.47 L1030.56,192.12 L1029.90,192.44 L1029.20,192.68 L1029.27,194.52 L1025.93,194.52 L1026.00,192.68 L1025.30,192.44 L1024.64,192.12 L1023.39,193.47 L1021.03,191.11 L1022.38,189.86 L1022.06,189.20 L1021.82,188.50 L1019.98,188.57 L1019.98,185.23 L1021.82,185.30 L1022.06,184.60 L1022.38,183.94 L1021.03,182.69 L1023.39,180.33 L1024.64,181.68Z M1030.00,186.90 A2.4,2.4 0 1,0 1025.20,186.90 A2.4,2.4 0 1,0 1030.00,186.90Z" fill="#5e5e5e" fill-rule="evenodd"/>
<path d="M675.12,401.87 L675.69,401.68 L675.63,400.15 L678.37,400.15 L678.31,401.68 L678.88,401.87 L679.42,402.14 L680.45,401.01 L682.39,402.95 L681.26,403.98 L681.53,404.52 L681.72,405.09 L683.25,405.03 L683.25,407.77 L681.72,407.71 L681.53,408.28 L681.26,408.82 L682.39,409.85 L680.45,411.79 L679.42,410.66 L678.88,410.93 L678.31,411.12 L678.37,412.65 L675.63,412.65 L675.69,411.12 L675.12,410.93 L674.58,410.66 L673.55,411.79 L671.61,409.85 L672.74,408.82 L672.47,408.28 L672.28,407.71 L670.75,407.77 L670.75,405.03 L672.28,405.09 L672.47,404.52 L672.74,403.98 L671.61,402.95 L673.55,401.01 L674.58,402.14Z M678.90,406.40 A1.9,1.9 0 1,0 675.10,406.40 A1.9,1.9 0 1,0 678.90,406.40Z" fill="#c9c9c9" fill-rule="evenodd"/>
<path d="M675.12,681.07 L675.69,680.88 L675.63,679.35 L678.37,679.35 L678.31,680.88 L678.88,681.07 L679.42,681.34 L680.45,680.21 L682.39,682.15 L681.26,683.18 L681.53,683.72 L681.72,684.29 L683.25,684.23 L683.25,686.97 L681.72,686.91 L681.53,687.48 L681.26,688.02 L682.39,689.05 L680.45,690.99 L679.42,689.86 L678.88,690.13 L678.31,690.32 L678.37,691.85 L675.63,691.85 L675.69,690.32 L675.12,690.13 L674.58,689.86 L673.55,690.99 L671.61,689.05 L672.74,688.02 L672.47,687.48 L672.28,686.91 L670.75,686.97 L670.75,684.23 L672.28,684.29 L672.47,683.72 L672.74,683.18 L671.61,682.15 L673.55,680.21 L674.58,681.34Z M678.90,685.60 A1.9,1.9 0 1,0 675.10,685.60 A1.9,1.9 0 1,0 678.90,685.60Z" fill="#c9c9c9" fill-rule="evenodd"/>
<path d="M675.12,893.07 L675.69,892.88 L675.63,891.35 L678.37,891.35 L678.31,892.88 L678.88,893.07 L679.42,893.34 L680.45,892.21 L682.39,894.15 L681.26,895.18 L681.53,895.72 L681.72,896.29 L683.25,896.23 L683.25,898.97 L681.72,898.91 L681.53,899.48 L681.26,900.02 L682.39,901.05 L680.45,902.99 L679.42,901.86 L678.88,902.13 L678.31,902.32 L678.37,903.85 L675.63,903.85 L675.69,902.32 L675.12,902.13 L674.58,901.86 L673.55,902.99 L671.61,901.05 L672.74,900.02 L672.47,899.48 L672.28,898.91 L670.75,898.97 L670.75,896.23 L672.28,896.29 L672.47,895.72 L672.74,895.18 L671.61,894.15 L673.55,892.21 L674.58,893.34Z M678.90,897.60 A1.9,1.9 0 1,0 675.10,897.60 A1.9,1.9 0 1,0 678.90,897.60Z" fill="#c9c9c9" fill-rule="evenodd"/>
<path d="M1689.8,361.9 L1694.6,356.9 L1699.4,361.9" fill="none" stroke="#8c92a8" stroke-width="1.3"/>
<path d="M1689.8,641.0 L1694.6,636.0 L1699.4,641.0" fill="none" stroke="#8c92a8" stroke-width="1.3"/>
<path d="M1689.8,853.2 L1694.6,848.2 L1699.4,853.2" fill="none" stroke="#8c92a8" stroke-width="1.3"/>
<path d="M916.5,480.8 L921.6,485.8 L926.7,480.8" fill="none" stroke="#8c92a8" stroke-width="1.3"/>
<path d="M1008.5,1035.8 L1013.2,1040.6 L1017.9,1035.8" fill="none" stroke="#8c92a8" stroke-width="1.3"/>
<path d="M972.6,476.2 V490 M965.7,483.1 H979.5" fill="none" stroke="#6cbd6a" stroke-width="1.6"/></svg>
<div id="tx"><div class="t" style="left:55.80px;top:25.21px;font-size:17.2px;color:#ffffff;font-weight:700;letter-spacing:1.000px">CURITY<span class="bl"></span></div>
<div class="t" style="left:413.30px;top:25.51px;font-size:16.5px;color:#f2f2f4;font-weight:400;letter-spacing:-0.700px">System<span class="bl"></span></div>
<div class="t" style="left:544.80px;top:25.51px;font-size:16.5px;color:#a9adbf;font-weight:400;letter-spacing:-0.514px">Profiles<span class="bl"></span></div>
<div class="t" style="left:1624.00px;top:25.30px;font-size:16.5px;color:#f2f2f4;font-weight:400;letter-spacing:-1.200px">Changes<span class="bl"></span></div>
<div class="t" style="left:1781.50px;top:25.30px;font-size:16.5px;color:#f2f2f4;font-weight:400;letter-spacing:-0.350px">admin<span class="bl"></span></div>
<div class="t" style="left:1915.80px;top:25.30px;font-size:16.5px;color:#f6f6f8;font-weight:400;letter-spacing:-0.444px">Facilities<span class="bl"></span></div>
<div class="t" style="left:86.80px;top:101.91px;font-size:15.5px;color:#9fa4b6;font-weight:400;letter-spacing:-0.210px">Authentication Service<span class="bl"></span></div>
<div class="t" style="left:86.80px;top:155.00px;font-size:15.5px;color:#f3f3f5;font-weight:400;letter-spacing:-0.375px">Token Service<span class="bl"></span></div>
<div class="t" style="left:85.80px;top:207.80px;font-size:15.5px;color:#9fa4b6;font-weight:400;letter-spacing:-0.433px">General<span class="bl"></span></div>
<div class="t" style="left:102.10px;top:260.91px;font-size:15.5px;color:#9fa4b6;font-weight:400;letter-spacing:-0.579px">Client Settings<span class="bl"></span></div>
<div class="t" style="left:102.10px;top:314.20px;font-size:15.5px;color:#f3f3f5;font-weight:400;letter-spacing:-0.626px">Dynamic Registration<span class="bl"></span></div>
<div class="t" style="left:85.80px;top:367.30px;font-size:15.5px;color:#9fa4b6;font-weight:400;letter-spacing:-0.167px">Clients<span class="bl"></span></div>
<div class="t" style="left:85.80px;top:420.30px;font-size:15.5px;color:#9fa4b6;font-weight:400;letter-spacing:-0.240px">Scopes<span class="bl"></span></div>
<div class="t" style="left:102.10px;top:473.00px;font-size:15.5px;color:#9fa4b6;font-weight:400;letter-spacing:-0.620px">Claims<span class="bl"></span></div>
<div class="t" style="left:102.10px;top:525.91px;font-size:15.5px;color:#9fa4b6;font-weight:400;letter-spacing:-0.660px">Claims Providers<span class="bl"></span></div>
<div class="t" style="left:102.10px;top:579.00px;font-size:15.5px;color:#9fa4b6;font-weight:400;letter-spacing:-0.685px">Claims Mappers<span class="bl"></span></div>
<div class="t" style="left:85.80px;top:632.61px;font-size:15.5px;color:#9fa4b6;font-weight:400;letter-spacing:-0.200px">Endpoints<span class="bl"></span></div>
<div class="t" style="left:86.80px;top:685.41px;font-size:15.5px;color:#9fa4b6;font-weight:400;letter-spacing:-0.250px">Token Issuers<span class="bl"></span></div>
<div class="t" style="left:81.80px;top:735.00px;font-size:15.5px;color:#9fa4b6;font-weight:400;letter-spacing:-0.336px">User Management<span class="bl"></span></div>
<div class="t" style="left:70.10px;top:800.31px;font-size:13.2px;color:#9fa4b6;font-weight:400;letter-spacing:-0.311px">Add related profile<span class="bl"></span></div>
<div class="t" style="left:1392.80px;top:119.31px;font-size:13.5px;color:#8a90a6;font-weight:400;letter-spacing:-1.100px">API<span class="bl"></span></div>
<div class="t" style="left:1466.30px;top:119.31px;font-size:13.5px;color:#8a90a6;font-weight:400;letter-spacing:-0.564px">Download as XML<span class="bl"></span></div>
<div class="t" style="left:1623.10px;top:119.31px;font-size:13.5px;color:#8a90a6;font-weight:400;letter-spacing:-0.714px">View XML<span class="bl"></span></div>
<div class="t" style="left:679.60px;top:180.30px;font-size:14.8px;color:#6a6a6a;font-weight:400;letter-spacing:-1.000px">General<span class="bl"></span></div>
<div class="t" style="left:775.50px;top:180.30px;font-size:14.8px;color:#6a6a6a;font-weight:400;letter-spacing:-0.550px">Templatized<span class="bl"></span></div>
<div class="t" style="left:896.60px;top:180.30px;font-size:14.8px;color:#6a6a6a;font-weight:400;letter-spacing:-0.571px">Non-templatized<span class="bl"></span></div>
<div class="t" style="left:1044.10px;top:180.30px;font-size:14.8px;color:#6a6a6a;font-weight:400;letter-spacing:-1.100px">DCR Management<span class="bl"></span></div>
<div class="t" style="left:646.80px;top:257.41px;font-size:42.5px;color:#141414;font-weight:400;letter-spacing:-0.362px">Dynamic Client Registration<span class="bl"></span></div>
<div class="t" style="left:1628.80px;top:280.21px;font-size:16.5px;color:#666666;font-weight:400;letter-spacing:-0.967px">Enable DCR<span class="bl"></span></div>
<div class="t" style="left:697.50px;top:394.50px;font-size:21px;color:#141414;font-weight:400;letter-spacing:-0.333px">General<span class="bl"></span></div>
<div class="t" style="left:687.50px;top:443.80px;font-size:17px;color:#555555;font-weight:400;letter-spacing:-0.647px">Client Data Source<span class="bl"></span></div>
<div class="t" style="left:698.70px;top:477.20px;font-size:13.5px;color:#8b8fae;font-weight:400;letter-spacing:-0.318px">default-datasource<span class="bl"></span></div>
<div class="t" style="left:987.20px;top:477.01px;font-size:13.5px;color:#6cbd6a;font-weight:400;letter-spacing:-0.560px">Create<span class="bl"></span></div>
<div class="t" style="left:687.50px;top:511.01px;font-size:13.2px;color:#666666;font-weight:400;letter-spacing:-0.262px">Reference to a datasource that stores clients; this datasource<span class="bl"></span></div>
<div class="t" style="left:687.50px;top:529.51px;font-size:13.2px;color:#666666;font-weight:400;letter-spacing:-0.262px">is also used to store clients that are registered through<span class="bl"></span></div>
<div class="t" style="left:687.50px;top:548.71px;font-size:13.2px;color:#666666;font-weight:400;letter-spacing:-0.262px">Dynamic Client Registration<span class="bl"></span></div>
<div class="t" style="left:697.50px;top:674.61px;font-size:21px;color:#141414;font-weight:400;letter-spacing:0.230px">Templatized<span class="bl"></span></div>
<div class="t" style="left:687.30px;top:722.91px;font-size:17px;color:#666666;font-weight:400;letter-spacing:-0.057px">Newly registered clients must use an existing one as a sort of template to determine which capabilities, authentication methods, etc.<span class="bl"></span></div>
<div class="t" style="left:687.30px;top:752.60px;font-size:17px;color:#666666;font-weight:400;letter-spacing:-0.057px">are allowed<span class="bl"></span></div>
<div class="t" style="left:696.30px;top:886.30px;font-size:21px;color:#141414;font-weight:400;letter-spacing:0.164px">Non-templatized<span class="bl"></span></div>
<div class="t" style="left:688.80px;top:933.91px;font-size:17px;color:#666666;font-weight:400;letter-spacing:-0.089px">Allow new clients to be registered which are not based on any existing client configuration<span class="bl"></span></div>
<div class="t" style="left:688.80px;top:998.41px;font-size:16.5px;color:#555555;font-weight:400;letter-spacing:-0.130px">Authentication Method<span class="bl"></span></div>
<div class="t" style="left:698.50px;top:1032.20px;font-size:13.5px;color:#8b8fae;font-weight:400;letter-spacing:-0.294px">no-authentication<span class="bl"></span></div>
<div class="t" style="left:687.80px;top:1088.90px;font-size:18px;color:#656c88;font-weight:400;letter-spacing:-0.668px">Signed UserInfo Token Issuers<span class="bl"></span></div>
<div class="t" style="left:1949.20px;top:1100.81px;font-size:24px;color:#ffffff;font-weight:400;letter-spacing:-0.668px">?<span class="bl"></span></div></div>
</body></html>
